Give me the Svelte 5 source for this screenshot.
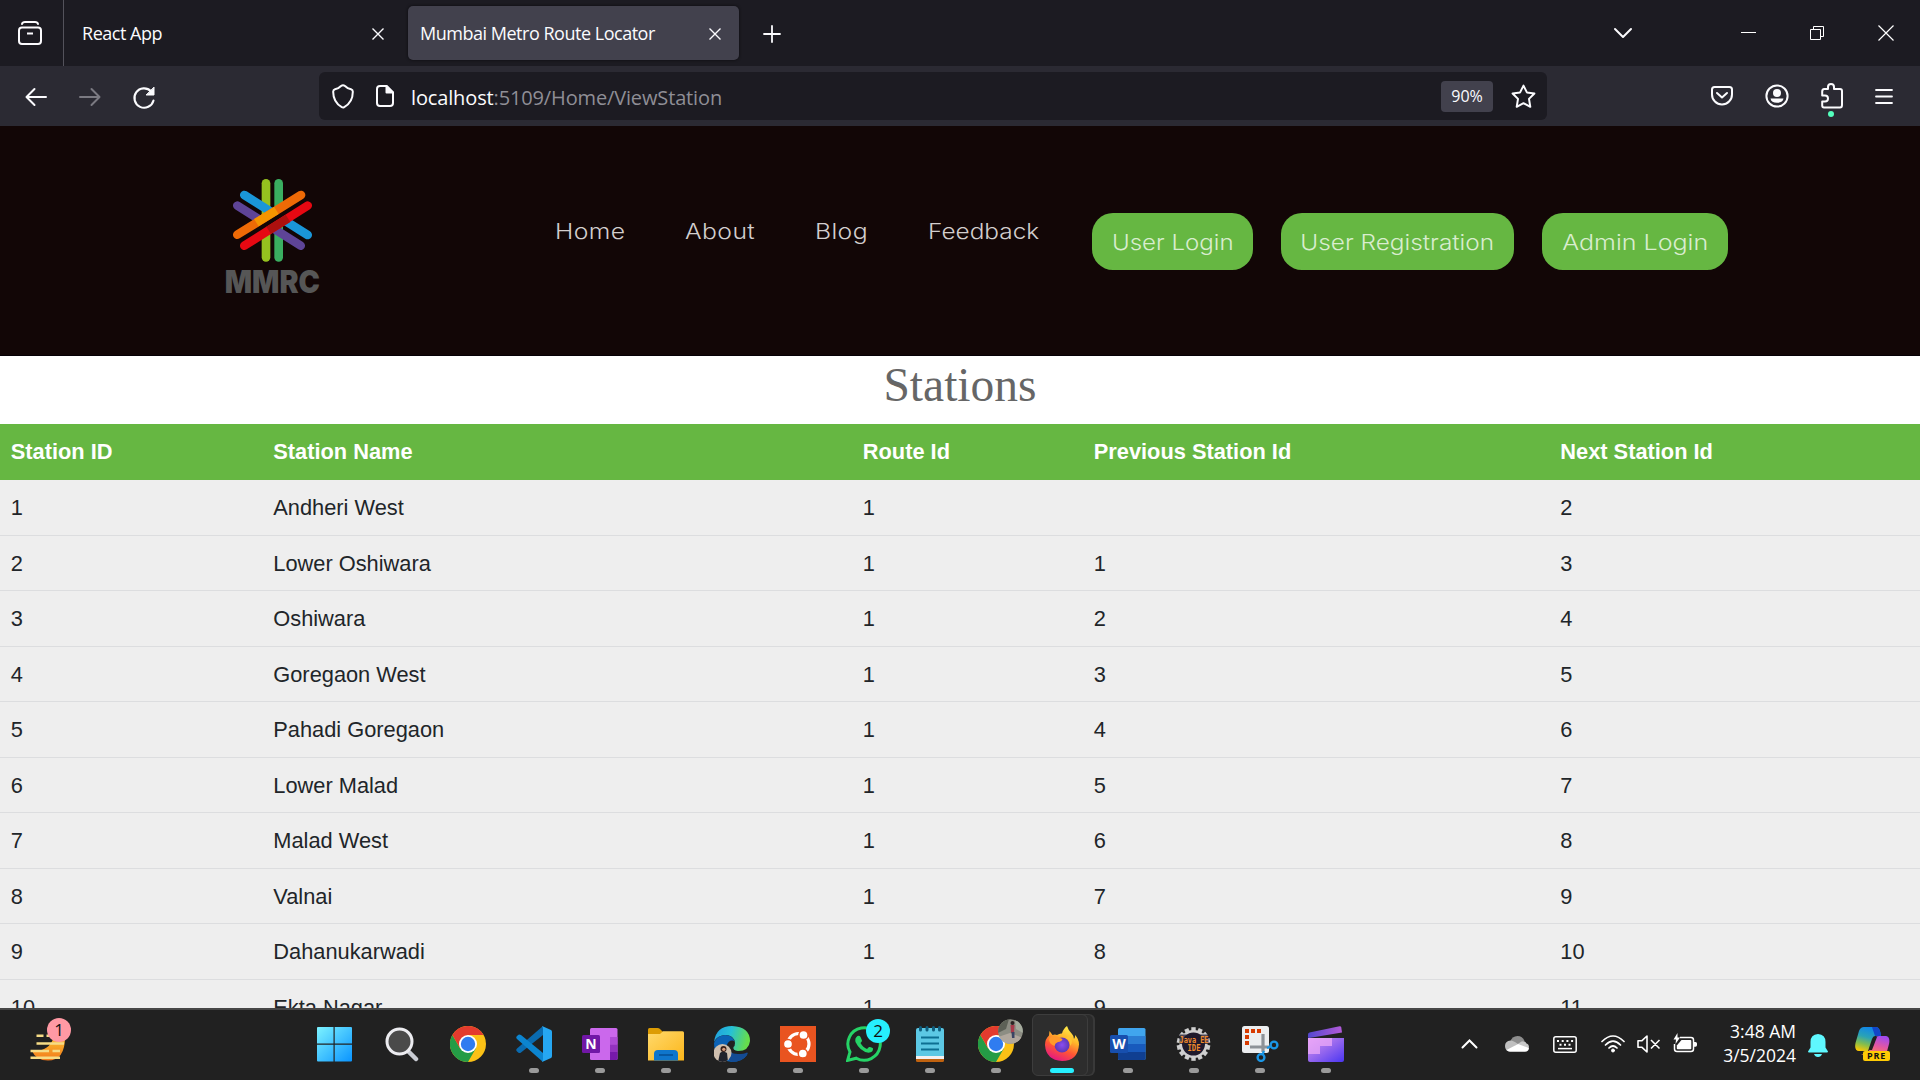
<script>
  const columns = ['Station ID', 'Station Name', 'Route Id', 'Previous Station Id', 'Next Station Id'];
  const names = [
    'Andheri West', 'Lower Oshiwara', 'Oshiwara', 'Goregaon West', 'Pahadi Goregaon',
    'Lower Malad', 'Malad West', 'Valnai', 'Dahanukarwadi', 'Ekta Nagar'
  ];
  const stations = names.map((name, i) => [i + 1, name, 1, i === 0 ? '' : i, i + 2]);

  const links = ['Home', 'About', 'Blog', 'Feedback'];
  const actions = ['User Login', 'User Registration', 'Admin Login'];

  const teeth = Array.from({ length: 14 }, (_, i) => (i * 360) / 14);
</script>

{#snippet chrome()}
  <circle cx="18" cy="18" r="18" fill="#fbc116" />
  <path d="M2.4 9 A18 18 0 0 0 18 36 L25.8 22.5 L18 18 L10.2 22.5 Z" fill="#249c46" />
  <path d="M2.4 9 A18 18 0 0 1 33.6 9 H18 L10.2 22.5 Z" fill="#e33b2e" />
  <circle cx="18" cy="18" r="9" fill="#fff" />
  <circle cx="18" cy="18" r="7.2" fill="#2f7cf0" />
{/snippet}

<div class="screen">
  <header class="tabs">
    <div class="library">
      <svg width="26" height="26" viewBox="0 0 26 26" fill="none" stroke="#fbfbfe" stroke-width="2">
        <rect x="2" y="7.5" width="22" height="16.5" rx="3" />
        <path d="M5 4 Q5.5 2 8 2 H18 Q20.5 2 21 4" stroke-linecap="round" />
        <path d="M10 13.5 H16" />
      </svg>
    </div>
    <div class="tab">
      <span>React App</span>
      <svg width="12" height="12" viewBox="0 0 12 12" stroke="#fbfbfe" stroke-width="1.4"><path d="M.5 .5 L11.5 11.5 M11.5 .5 L.5 11.5" /></svg>
    </div>
    <div class="tab active">
      <span>Mumbai Metro Route Locator</span>
      <svg width="12" height="12" viewBox="0 0 12 12" stroke="#fbfbfe" stroke-width="1.4"><path d="M.5 .5 L11.5 11.5 M11.5 .5 L.5 11.5" /></svg>
    </div>
    <svg class="plus" width="18" height="18" viewBox="0 0 18 18" stroke="#fbfbfe" stroke-width="1.8" stroke-linecap="round"><path d="M9 1 V17 M1 9 H17" /></svg>
    <div class="window">
      <svg width="20" height="12" viewBox="0 0 20 12" fill="none" stroke="#fbfbfe" stroke-width="2" stroke-linecap="round" stroke-linejoin="round"><path d="M2 2 L10 10 L18 2" /></svg>
      <svg width="15" height="15" viewBox="0 0 15 15" stroke="#fff"><path d="M0 6.5 H15" /></svg>
      <svg width="14" height="14" viewBox="0 0 14 14" fill="none" stroke="#fff"><path d="M.5 3.5 H10.5 V13.5 H.5 Z M3.5 3.5 V.5 H13.5 V10.5 H10.5" /></svg>
      <svg width="16" height="16" viewBox="0 0 16 16" stroke="#fff" stroke-width="1.2"><path d="M.5 .5 L15.5 15.5 M15.5 .5 L.5 15.5" /></svg>
    </div>
  </header>

  <div class="toolbar">
    <div class="history">
      <svg width="22" height="20" viewBox="0 0 22 20" fill="none" stroke="#fbfbfe" stroke-width="2" stroke-linecap="round" stroke-linejoin="round"><path d="M21 10 H2 M9.5 2 L1.5 10 L9.5 18" /></svg>
      <svg width="22" height="20" viewBox="0 0 22 20" fill="none" stroke="#7b7a82" stroke-width="2" stroke-linecap="round" stroke-linejoin="round"><path d="M1 10 H20 M12.5 2 L20.5 10 L12.5 18" /></svg>
      <svg width="24" height="24" viewBox="0 0 24 24" fill="none" stroke="#fbfbfe" stroke-width="2.1" stroke-linecap="round"><path d="M21.5 14.5 A9.7 9.7 0 1 1 19 5.2" /><path d="M22 1.5 V9 H14.5 Z" fill="#fbfbfe" stroke-width="1" stroke-linejoin="round" /></svg>
    </div>
    <div class="urlbar">
      <svg width="22" height="25" viewBox="0 0 22 25" fill="none" stroke="#fbfbfe" stroke-width="2" stroke-linejoin="round"><path d="M11 1.3 Q12 1.3 13 2 Q15.500 4.600 19 5.200 Q20.800 5.700 20.800 7.500 Q21 18 12.200 23.200 Q11 23.900 9.800 23.200 Q1 18 1.200 7.500 Q1.200 5.700 3 5.200 Q6.500 4.600 9 2 Q10 1.300 11 1.300 Z" /></svg>
      <svg class="page-icon" width="18" height="22" viewBox="0 0 18 22" fill="none" stroke="#fbfbfe" stroke-width="2" stroke-linejoin="round"><path d="M4 1 H10.500 L17 7.500 V18 Q17 21 14 21 H4 Q1 21 1 18 V4 Q1 1 4 1 Z" /><path d="M10.500 1 V7.500 H17 Z" fill="#fbfbfe" /></svg>
      <span class="url"><b>localhost</b>:5109/Home/ViewStation</span>
      <span class="zoom">90%</span>
      <svg class="star" width="25" height="25" viewBox="0 0 25 25" fill="none" stroke="#fbfbfe" stroke-width="2" stroke-linejoin="round"><path d="M12.500 1.600 L15.900 8.400 L23.400 9.500 L18 14.900 L19.300 22.800 L12.500 19.200 L5.700 22.800 L7 14.900 L1.600 9.500 L9.100 8.400 Z" /></svg>
    </div>
    <div class="extras">
      <svg width="22" height="20" viewBox="0 0 22 20" fill="none" stroke="#fbfbfe" stroke-width="2" stroke-linecap="round" stroke-linejoin="round"><path d="M3.500 1 H18.500 Q21 1 21 3.500 V8.500 A10 10 0 0 1 1 8.500 V3.500 Q1 1 3.500 1 Z M6 7 L11 11.500 L16 7" /></svg>
      <svg width="24" height="24" viewBox="0 0 24 24"><circle cx="12" cy="12" r="10.600" fill="none" stroke="#fbfbfe" stroke-width="2" /><circle cx="12" cy="9" r="4" fill="#fbfbfe" /><path d="M5.500 14.600 H18.500 Q17.800 18.800 12 18.800 Q6.200 18.800 5.500 14.600 Z" fill="#fbfbfe" /></svg>
      <span class="ext">
        <svg width="22" height="26" viewBox="0 0 22 26" fill="none" stroke="#fbfbfe" stroke-width="2" stroke-linejoin="round"><path d="M7 6 V4 A3 3 0 0 1 13 4 V6 H19 Q21 6 21 8 V22 Q21 24.500 19 24.500 H3 Q1.200 24.500 1.200 22.500 V18.500 H4 A3 3 0 0 0 4 12.500 H1.200 V8.500 Q1.200 6 3.200 6 Z" /></svg>
        <i></i>
      </span>
      <svg width="18" height="15" viewBox="0 0 18 15" stroke="#fbfbfe" stroke-width="1.800" stroke-linecap="round"><path d="M1 1 H17 M1 7.500 H17 M1 14 H17" /></svg>
    </div>
  </div>

  <nav class="site">
    <svg class="logo" width="94" height="116" viewBox="78 54 282 348" stroke-width="26" stroke-linecap="round">
      <path d="M198 70 V292" stroke="#95c11f" />
      <path d="M236 70 V292" stroke="#3aae60" />
      <path d="M133 105 L323 225" stroke="#1a96d8" />
      <path d="M112 137 L302 257" stroke="#5e4497" />
      <path d="M130 238 L306 123" stroke="#120606" stroke-width="20" stroke-linecap="butt" />
      <path d="M112 224 L303 105" stroke="#ee6a06" />
      <path d="M169 188 L229 151" stroke="#f59400" stroke-linecap="butt" />
      <path d="M133 257 L323 137" stroke="#e60812" />
      <path d="M206 211 L264 175" stroke="#ad100e" stroke-linecap="butt" />
      <text x="74" y="399" textLength="286" lengthAdjust="spacingAndGlyphs">MMRC</text>
    </svg>
    <div class="links">
      {#each links as link}<a href="#top">{link}</a>{/each}
    </div>
    <div class="actions">
      {#each actions as action}<button><span>{action}</span></button>{/each}
    </div>
  </nav>

  <main>
    <h1>Stations</h1>
    <div class="table">
      <div class="row head">
        {#each columns as column}<span>{column}</span>{/each}
      </div>
      {#each stations as station}
        <div class="row">
          {#each station as value}<span>{value}</span>{/each}
        </div>
      {/each}
    </div>
  </main>

  <footer>
    <div class="weather">
      <svg width="36" height="29" viewBox="0 0 36 29">
        <defs><linearGradient id="moon" x1="0" y1="0" x2="0" y2="1"><stop offset="0" stop-color="#fbbf2e" /><stop offset="1" stop-color="#f2791c" /></linearGradient></defs>
        <path d="M35 5 Q35 28.500 18 28.500 Q6 28.500 2 19 Q19 20 24 5 Z" fill="url(#moon)" />
        <path d="M6 19 Q9 17 13 20 H6 Z" fill="#b98a4a" />
        <path d="M6.500 4 H13.500 M16.500 4 H22 M6.500 12 H34 M.5 20 H19 M22.500 20 H30 M.5 27 H30" transform="scale(1 .95)" stroke="#f6dc86" stroke-width="2.600" />
      </svg>
      <span class="badge pink">1</span>
    </div>

    <div class="apps">
      <div class="app quiet start">
        <svg width="36" height="36" viewBox="0 0 36 36">
          <defs><linearGradient id="win" x1="0" y1="0" x2="1" y2="1"><stop offset="0" stop-color="#7df3ff" /><stop offset="1" stop-color="#0a94ff" /></linearGradient></defs>
          <path d="M2 1 H17.500 V17.500 H1 V2 Q1 1 2 1 Z M18.700 1 H35 Q36 1 36 2 V17.500 H18.700 Z M1 18.700 H17.500 V35.500 H2 Q1 35.500 1 34.500 Z M18.700 18.700 H36 V34.500 Q36 35.500 35 35.500 H18.700 Z" fill="url(#win)" />
        </svg>
      </div>
      <div class="app quiet">
        <svg width="36" height="36" viewBox="0 0 36 36">
          <path d="M24.500 25.500 L32 33" stroke="#c9ccd3" stroke-width="4.500" stroke-linecap="round" />
          <circle cx="15.500" cy="15.500" r="12.500" fill="#4a4a4a" stroke="#ececf0" stroke-width="3" />
        </svg>
      </div>
      <div class="app quiet"><svg width="36" height="36" viewBox="0 0 36 36">{@render chrome()}</svg></div>
      <div class="app">
        <svg width="36" height="36" viewBox="0 0 36 36">
          <path d="M1 22.500 Q-.5 24 1 25.500 L2.500 26.800 Q3.500 27.500 5 26.600 L27 9 V0 Z" fill="#0a6bb0" />
          <path d="M1 13 Q-.5 11.500 1 10 L2.500 8.700 Q3.500 8 5 8.900 L27 27 V36 Z" fill="#0c85d0" />
          <path d="M26 0 L35 4 Q36 4.600 36 6 V30 Q36 31.400 35 32 L26 36 Q27 35 27 33 V3 Q27 1 26 0 Z" fill="#26a7f2" />
        </svg>
      </div>
      <div class="app">
        <svg width="36" height="36" viewBox="0 0 36 36">
          <rect x="8" y="2" width="27.500" height="32" rx="1.500" fill="#cb68ec" />
          <path d="M28 11 H35.500 V18.500 H28 Z" fill="#ae4bd5" /><path d="M28 18.500 H35.500 V26 H28 Z" fill="#9332bf" /><path d="M28 26 H35.500 V32.500 Q35.500 34 34 34 H28 Z" fill="#7719aa" />
          <rect x="0" y="9" width="18" height="18" rx="1.500" fill="#7117a6" />
          <text x="9" y="23" class="glyph">N</text>
        </svg>
      </div>
      <div class="app">
        <svg width="36" height="36" viewBox="0 0 36 36">
          <defs><linearGradient id="fold" x1="0" y1="0" x2="1" y2="1"><stop offset="0" stop-color="#ffd96c" /><stop offset="1" stop-color="#fcb61a" /></linearGradient></defs>
          <path d="M0 3.500 Q0 2 1.500 2 H9.500 Q11 2 12 3 L15 6 V12 H0 Z" fill="#dd9c04" />
          <path d="M0 8 H12 L15 5.200 H34.500 Q36 5.200 36 6.700 V34.500 H0 Z" fill="url(#fold)" />
          <path d="M6 34.500 V28 Q6 24 10 24 H26 Q30 24 30 28 V34.500 Z" fill="#0f76cc" /><path d="M11 29 H25" stroke="#064f94" stroke-width="1.500" />
        </svg>
      </div>
      <div class="app">
        <svg width="36" height="36" viewBox="0 0 36 36">
          <defs>
            <linearGradient id="edge" x1="0" y1="0" x2="1" y2=".2"><stop offset="0" stop-color="#1f9de0" /><stop offset=".5" stop-color="#27c0d5" /><stop offset="1" stop-color="#66dd4c" /></linearGradient>
            <clipPath id="face"><circle cx="8.500" cy="27" r="9" /></clipPath>
          </defs>
          <path d="M0 16 Q2 0 18 0 Q36 1 36 15 Q35 25 24 25 Q18.500 24.500 19.500 21 Q21 20 21 17 Q20 9 11 9 Q3 9.500 0 16 Z" fill="url(#edge)" />
          <path d="M0 17 Q3 9.500 11 9 Q18 9 20.500 15 Q15 13 12.500 20 Q12 33 30 30 Q35 28 33 29 Q28 36 18 36 Q0 34 0 17 Z" fill="#0c62b5" />
          <path d="M13 19 Q14 28 24 28 Q30 28 33 26.500 Q34.500 27 33 29 Q28 36 18 36 Q11 33 12 22 Z" fill="#134b94" />
          <g clip-path="url(#face)"><rect y="17" width="18" height="19" fill="#cfbfae" /><path d="M4 36 L6 27 L9 25 L13 27 L14 36 Z" fill="#20222b" /><circle cx="9.500" cy="23" r="3" fill="#3a211b" /><circle cx="9.800" cy="23.300" r="1.600" fill="#d79c7c" /></g>
        </svg>
      </div>
      <div class="app">
        <svg width="36" height="36" viewBox="0 0 36 36">
          <rect width="36" height="36" fill="#e95420" />
          <circle cx="18.500" cy="18" r="10.500" fill="none" stroke="#fff" stroke-width="3.200" />
          <g fill="#fff" stroke="#e95420" stroke-width="1.500"><circle cx="8" cy="18" r="4.600" /><circle cx="23.500" cy="9" r="4.600" /><circle cx="22.800" cy="27.500" r="4.600" /></g>
        </svg>
      </div>
      <div class="app">
        <svg width="36" height="36" viewBox="0 0 36 36">
          <path d="M1.600 34.400 L4 26 A16.200 16.200 0 1 1 10.300 32.200 Z" fill="none" stroke="#25d366" stroke-width="3" stroke-linejoin="miter" />
          <path d="M11.500 10 Q13.500 9 14.500 11 L16 14.500 Q16 15.500 14.500 17 Q17 21.500 21 23 L23 21 Q24 20.500 27 22.300 Q27.500 26.500 22.500 26.700 Q14 25.500 9.500 16 Q8.500 12 11.500 10 Z" fill="#25d366" />
        </svg>
        <span class="badge cyan">2</span>
      </div>
      <div class="app">
        <svg width="36" height="36" viewBox="0 0 36 36">
          <path d="M4 30 H32 V34.500 Q32 36 30.500 36 H5.500 Q4 36 4 34.500 Z" fill="#c0620f" /><rect x="4" y="29" width="28" height="4" fill="#f3f0f0" />
          <path d="M4 4 Q4 2 6 2 H30 Q32 2 32 4 V30 H4 Z" fill="#5cc8e4" />
          <path d="M9 11.500 H27 M9 17.500 H27 M9 23.500 H27" stroke="#0c6f92" stroke-width="2" />
          <path d="M8.500 1.500 V4 M15 1.500 V4 M21.500 1.500 V4 M27.500 1.500 V4" stroke="#0f5e7e" stroke-width="3" stroke-linecap="round" />
        </svg>
      </div>
      <div class="app">
        <svg width="36" height="36" viewBox="0 0 36 36">{@render chrome()}</svg>
        <svg class="avatar" width="25" height="25" viewBox="0 0 25 25">
          <defs><clipPath id="round"><circle cx="12.500" cy="12.500" r="12.300" /></clipPath></defs>
          <g clip-path="url(#round)"><rect width="25" height="25" fill="#8c8d83" /><path d="M0 0 H11 L8 10 L0 14 Z" fill="#5d6157" /><path d="M17 0 H25 V14 L18 10 Z" fill="#a5ab9d" /><path d="M0 18 L12 14 L25 19 V25 H0 Z" fill="#b0a79d" /><path d="M12.500 6 H16.500 L16 14 H13 Z" fill="#a83a4a" /><path d="M13.500 13 H16.500 V19 H14 Z" fill="#3a4564" /><circle cx="14.500" cy="4" r="2" fill="#2b2322" /></g>
        </svg>
      </div>
      <div class="app current">
        <svg width="36" height="36" viewBox="0 0 36 36">
          <defs>
            <linearGradient id="fx" x1=".75" y1="0" x2=".3" y2="1"><stop offset="0" stop-color="#fff44f" /><stop offset=".35" stop-color="#ffb629" /><stop offset=".65" stop-color="#ff5634" /><stop offset="1" stop-color="#e31587" /></linearGradient>
            <radialGradient id="globe"><stop offset="0" stop-color="#8a4df0" /><stop offset="1" stop-color="#5b38b5" /></radialGradient>
          </defs>
          <path d="M23 0 Q24 4 28 8 Q30 10 30 13 Q31.500 11 31 9 Q35 13 35 18.500 Q34 35 18 35 Q2 34 1 19 Q1 13 5 9.500 L5.500 5 L8.500 9 Q11 8 13 9 Q16 7 18 7.500 Q19 3 23 0 Z" fill="url(#fx)" />
          <circle cx="18" cy="19" r="7.500" fill="url(#globe)" />
          <path d="M5 13 Q8 8.500 12 10 Q15 11.500 18.500 13 Q18 15.500 14 16 Q11 17 10.500 20 Q5 18 5 13 Z" fill="#ff9a2b" />
          <path d="M22 12 Q27 14 26 20 Q30 16 26 9 Z" fill="#ffc633" />
        </svg>
      </div>
      <div class="app">
        <svg width="36" height="36" viewBox="0 0 36 36">
          <rect x="8" y="2" width="27.500" height="32" rx="1.500" fill="#40a5ee" />
          <path d="M8 10 H35.500 V18 H8 Z" fill="#2b7cd3" /><path d="M8 18 H35.500 V26 H8 Z" fill="#185abd" /><path d="M8 26 H35.500 V32.500 Q35.500 34 34 34 H9.500 Q8 34 8 32.500 Z" fill="#103f91" />
          <rect x="0" y="9" width="18" height="18" rx="1.500" fill="#174fae" />
          <text x="9" y="23" class="glyph">W</text>
        </svg>
      </div>
      <div class="app">
        <svg width="36" height="36" viewBox="0 0 36 36">
          <g transform="translate(17.500 18)">
            {#each teeth as angle}<rect x="-2.200" y="-16.800" width="4.400" height="5" fill="#cfcfcf" transform="rotate({angle})" />{/each}
            <circle r="12.800" fill="#1f1a2c" stroke="#cfcfcf" stroke-width="2.600" />
          </g>
          <path d="M3.500 8.500 H32.500 V18 H3.500 Z" fill="#1f1a2c" opacity=".75" />
          <text x="18" y="16.500" class="java" textLength="29" lengthAdjust="spacingAndGlyphs">Java EE</text>
          <text x="18" y="25" class="java" textLength="13" lengthAdjust="spacingAndGlyphs">IDE</text>
        </svg>
      </div>
      <div class="app">
        <svg width="40" height="36" viewBox="-2 0 40 36">
          <rect x="0" y="0" width="27" height="27" rx="2.500" fill="#eceef0" />
          <path d="M19 5 H5 V20" fill="none" stroke="#d83b01" stroke-width="4" stroke-dasharray="4 2" />
          <path d="M21 8 V26 M8 21 H28" fill="none" stroke="#8d9298" stroke-width="3.200" />
          <circle cx="32" cy="19" r="3.400" fill="none" stroke="#1a96e6" stroke-width="2.400" /><circle cx="19" cy="31.500" r="3.400" fill="none" stroke="#1a96e6" stroke-width="2.400" />
          <path d="M28.500 20.500 L25 22 M20.500 28.500 L22 25" stroke="#1a96e6" stroke-width="2.200" />
        </svg>
      </div>
      <div class="app">
        <svg width="36" height="36" viewBox="0 0 36 36">
          <defs>
            <linearGradient id="clip" x1="0" y1="0" x2="1" y2="1"><stop offset="0" stop-color="#d992f3" /><stop offset=".5" stop-color="#9466ee" /><stop offset="1" stop-color="#4a36f2" /></linearGradient>
            <linearGradient id="clap" x1="0" y1="0" x2="1" y2="0"><stop offset="0" stop-color="#5347cf" /><stop offset="1" stop-color="#b35ad8" /></linearGradient>
          </defs>
          <path d="M0 8.500 Q0 7 1.500 6.600 L31.500 .2 Q33 0 33.300 1.500 L34 6.500 L1 12 Q0 12 0 11 Z" fill="url(#clap)" />
          <path d="M0 12 H36 V34 Q36 36 34 36 H2 Q0 36 0 34 Z" fill="url(#clip)" />
          <path d="M0 12 H24 V20 H12 V28 H0 Z" fill="#ecaaf8" opacity=".75" />
        </svg>
      </div>
    </div>

    <div class="tray">
      <svg width="17" height="10" viewBox="0 0 17 10" fill="none" stroke="#fff" stroke-width="2" stroke-linecap="round"><path d="M1.500 8.500 L8.500 1.500 L15.500 8.500" /></svg>
      <svg class="t-cloud" width="24" height="16" viewBox="0 0 24 16">
        <path d="M5 6 Q7 0 12.500 0 Q17.500 0 19.500 5 L12 9 Z" fill="#8d8d8d" /><path d="M5 15.500 Q0 15 0 10 Q0 5 5.500 4.500 Q8.500 4.500 13 8 L4 15 Z" fill="#bfbfbf" /><path d="M12 8.500 L16.500 5.500 Q20 4.500 21.500 7.500 Q24 8 24 11.500 L22 13 Z" fill="#c9c9c9" /><path d="M1.500 14 L13 8 L24 12 Q23.500 15.800 20 15.800 H5 Q3 15.800 1.500 14 Z" fill="#fff" />
      </svg>
      <svg class="t-key" width="24" height="17" viewBox="0 0 24 17" fill="none" stroke="#fff" stroke-width="1.500"><rect x=".8" y=".8" width="22.400" height="15.400" rx="2" /><path d="M4 5 H20.500" stroke-width="2" stroke-dasharray="2 2.700" /><path d="M6.500 8.800 H18" stroke-width="2" stroke-dasharray="2 2.500" /><path d="M5 12.600 H19" /></svg>
      <svg class="t-wifi" width="24" height="18" viewBox="0 0 24 18" fill="none" stroke="#fff" stroke-width="1.700" stroke-linecap="round"><path d="M1 6.500 Q12 -4.500 23 6.500 M4.500 10 Q12 2.500 19.500 10 M8 13 Q12 9 16 13" /><circle cx="12" cy="15.500" r="1.500" fill="#fff" stroke-width="1" /></svg>
      <svg class="t-vol" width="24" height="18" viewBox="0 0 24 18" fill="none" stroke="#fff" stroke-width="1.600" stroke-linejoin="round"><path d="M1 5.700 H5 L10 1 V17 L5 12.300 H1 Z M14 5 L22.500 13.500 M22.500 5 L14 13.500" /></svg>
      <svg class="t-bat" width="24" height="20" viewBox="0 0 24 20"><path d="M7 4.500 H18 Q20.500 4.500 20.500 7 V16 Q20.500 18.500 18 18.500 H4 Q1.500 18.500 1.500 16 V11" fill="none" stroke="#fff" stroke-width="1.500" /><path d="M8.500 7 H17.500 Q18.300 7 18.300 8 V15.500 Q18.300 16.300 17.500 16.300 H4.500 Q3.800 16.300 3.800 15.500 V12.500 Z" fill="#fff" /><path d="M21 9 H22.500 Q24 9 24 10.500 V12 Q24 13.800 22.500 13.800 H21 Z M4.500 0 L.5 6.500 H3 L2.500 11 L7 4.500 H4.500 Z" fill="#fff" /></svg>
      <div class="clock"><span>3:48 AM</span><span>3/5/2024</span></div>
      <svg class="t-bell" width="20" height="23" viewBox="0 0 20 23"><path d="M10 0 Q17.500 .5 17.500 8 V13.500 L20 17.500 Q20 18.600 19 18.600 H1 Q0 18.600 0 17.500 L2.500 13.500 V8 Q2.500 .5 10 0 Z M6 20 H14 Q13 23 10 23 Q7 23 6 20 Z" fill="#5ff8ff" /></svg>
      <div class="copilot">
        <svg width="35" height="34" viewBox="0 0 35 34">
          <defs>
            <linearGradient id="cpa" x1=".5" y1="0" x2=".2" y2="1"><stop offset="0" stop-color="#1186e8" /><stop offset=".4" stop-color="#2aa3b5" /><stop offset=".7" stop-color="#83bd4e" /><stop offset="1" stop-color="#ffc800" /></linearGradient>
            <linearGradient id="cpb" x1=".7" y1="0" x2=".3" y2="1"><stop offset="0" stop-color="#a14af0" /><stop offset=".5" stop-color="#e458a0" /><stop offset="1" stop-color="#ff8a4c" /></linearGradient>
          </defs>
          <path d="M9 0 H21 Q25 0 26 9 H20 Q18 9 17 12 L13 24 H4 Q-1 24 .5 16 L4 4 Q5.500 0 9 0 Z" fill="url(#cpa)" />
          <path d="M17 0 H21 Q25 0 26 9 H20 Z" fill="#1246c8" />
          <path d="M24 9 H31 Q35.500 10 34 17 L31 28 H6 Q14 26 16 20 L20 11 Q21.500 9 24 9 Z" fill="url(#cpb)" />
          <path d="M19 10 L14 23 H17 L22 10 Z" fill="#202020" />
        </svg>
        <span>PRE</span>
      </div>
    </div>
  </footer>
</div>

<style>
  :global(body) { margin: 0; overflow: hidden; background: #fff; }
  * { box-sizing: border-box; }
  svg { display: block; flex: none; }

  .screen { width: 1920px; height: 1080px; display: flex; flex-direction: column; overflow: hidden; }

  .tabs { height: 66px; flex: none; display: flex; align-items: center; background: #1c1b22; color: #fbfbfe; font: 18px 'Open Sans', sans-serif; letter-spacing: -0.480px; }
  .tab span { margin-top: -2px; }
  .library { width: 64px; height: 66px; border-right: 1px solid #53525b; display: flex; align-items: center; padding-left: 17px; }
  .tab { width: 331px; height: 54px; border-radius: 5px; display: flex; align-items: center; justify-content: space-between; padding: 1px 17px 0 12px; margin-left: 6px; }
  .tab + .tab { margin-left: 7px; padding-right: 18px; }
  .active { background: #42414d; box-shadow: 0 0 3px #0a0a0d; }
  .plus { margin-left: 24px; margin-top: 2px; }
  .window { margin-left: auto; display: flex; align-items: center; padding-right: 26px; }
  .window svg:nth-child(2) { margin-left: 108px; }
  .window svg:nth-child(3) { margin-left: 54px; }
  .window svg:nth-child(4) { margin-left: 54px; }

  .toolbar { height: 60px; flex: none; display: flex; align-items: center; background: #2b2a33; }
  .history { width: 319px; padding: 2px 0 0 25px; display: flex; align-items: center; gap: 32px; }
  .history svg:nth-child(3) { margin-left: -1px; margin-top: 1px; }
  .urlbar { width: 1228px; height: 48px; border-radius: 6px; background: #1c1b22; display: flex; align-items: center; padding: 0 11px 0 13px; }
  .page-icon { margin-left: 22px; }
  .url { margin-left: 17px; font: 20px 'Open Sans', sans-serif; letter-spacing: -0.140px; color: #8f8e96; margin-top: 2px; }
  .url b { font-weight: 400; color: #fbfbfe; }
  .zoom { margin-left: auto; width: 52px; height: 31px; border-radius: 4px; background: #42414d; color: #fbfbfe; font: 16px/31px 'Open Sans', sans-serif; text-align: center; margin-top: 1px; }
  .star { margin-left: 18px; }
  .extras { margin-left: auto; display: flex; align-items: center; padding-right: 27px; }
  .extras > :nth-child(2) { margin-left: 32px; }
  .extras > :nth-child(3) { margin-left: 32px; }
  .extras > :nth-child(4) { margin-left: 32px; }
  .ext { position: relative; }
  .ext i { position: absolute; left: 7px; top: 28px; width: 6px; height: 6px; border-radius: 3px; background: #54ffbd; }

  .site { height: 230px; flex: none; display: flex; background: #120606; border-bottom: 1px solid #050006; font: 300 21.700px/30px Inter, sans-serif; }
  .logo { margin: 52px 0 0 226px; overflow: visible; }
  .logo text { font: 900 93px Inter, sans-serif; fill: #565656; stroke: none; }
  .links { margin: 90px 0 0 235px; display: grid; grid-template-columns: 130px 130px 113px 164px; height: 30px; justify-items: start; }
  /* Widened letterforms for the light geometric menu face */
  a { color: #d2cece; text-decoration: none; letter-spacing: 0.350px; white-space: nowrap; transform: scaleX(1.14); transform-origin: left; }
  a:nth-child(4) { letter-spacing: 0; transform: scaleX(1.125); }
  .actions { display: flex; gap: 28px; margin-top: 87px; height: 57px; }
  button { border: 0; border-radius: 21px; background: #66b742; color: #d9edcf; padding: 1px 0 0; font: inherit; width: 161px; }
  button span { display: inline-block; white-space: nowrap; transform: scaleX(1.11); }
  button:nth-child(2) { width: 233px; }
  button:nth-child(2) span { transform: scaleX(1.125); }
  button:nth-child(3) { width: 186px; }
  button:nth-child(3) span { transform: scaleX(1.155); }

  main { flex: 1; min-height: 0; overflow: hidden; background: #fff; }
  h1 { margin: 0; height: 68px; font: 400 47.500px/58px 'Liberation Serif', serif; color: #666; text-align: center; }
  .row { display: grid; grid-template-columns: 262.500px 589.500px 231px 466.500px 1fr; height: 55.550px; border-bottom: 1px solid #dcdddf; background: #eee; color: #212529; font: 21.800px/55px 'Liberation Sans', sans-serif; }
  .row span { padding-left: 10.800px; }
  .head { height: 56px; background: #66b742; border: 0; color: #fff; font-weight: 700; line-height: 55px; }

  footer { height: 72px; flex: none; background: #212121; border-top: 2px solid #464646; display: flex; color: #fff; font-family: 'Open Sans', sans-serif; }
  .weather { position: relative; width: 303px; padding: 22px 0 0 30px; }
  .badge { position: absolute; width: 24px; height: 24px; border-radius: 12px; font-size: 17px; line-height: 23px; text-align: center; color: #111; }
  .pink { left: 47px; top: 8px; background: #ff99a4; }
  .cyan { left: 35px; top: 9px; background: #26f0ff; }
  .apps { display: flex; }
  .app { position: relative; width: 66px; display: flex; flex-direction: column; align-items: center; padding-top: 16px; }
  .app::after { content: ''; position: absolute; left: 28px; top: 58px; width: 10px; height: 5px; border-radius: 3px; background: #9a9a9a; }
  .quiet::after { display: none; }
  .start { padding-right: 4px; }
  .current::before { content: ''; position: absolute; left: 3px; top: 4px; width: 54px; height: 60px; border-radius: 6px; border: 1px solid #3d3d3d; background: #2d2d2d; box-shadow: 6px 0 0 -1px #2b2b2b, 7px 0 0 0 #393939; }
  .current svg { position: relative; }
  .current::after { left: 21px; width: 24px; background: #26f0ff; }
  .glyph { font: 700 14px 'Open Sans', sans-serif; fill: #fff; text-anchor: middle; }
  .java { font: 700 8.500px 'DejaVu Sans Mono', monospace; fill: #f08a2c; text-anchor: middle; }
  .avatar { position: absolute; left: 35px; top: 9px; }

  .tray { margin-left: auto; width: 459px; display: flex; align-items: center; padding-bottom: 2px; }
  .t-cloud { margin-left: 27px; }
  .t-key { margin-left: 24px; }
  .t-wifi { margin-left: 24px; }
  .t-vol { margin-left: 12px; }
  .t-bat { margin-left: 12px; margin-top: -3px; }
  .clock { width: 99px; display: flex; flex-direction: column; align-items: flex-end; font-size: 17.500px; line-height: 24px; margin-top: -2px; }
  .t-bell { margin-left: 12px; margin-top: 2px; }
  .copilot { position: relative; margin-left: 27px; }
  .copilot span { position: absolute; left: 8px; top: 24px; width: 27px; height: 10px; border-radius: 2px; background: #ffcb05; color: #111; font: 700 9px/10px 'Open Sans', sans-serif; letter-spacing: 0.800px; text-align: center; }
</style>
